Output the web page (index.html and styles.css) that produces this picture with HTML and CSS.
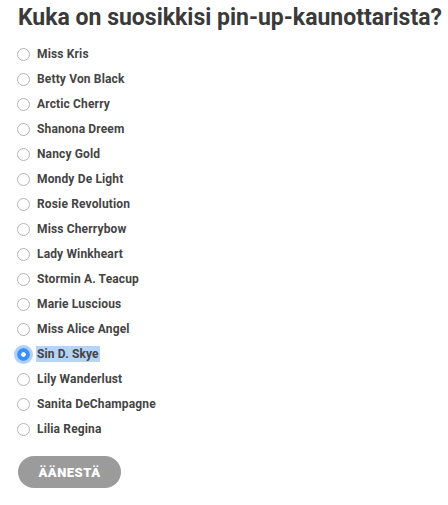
FILE: index.html
```html
<!DOCTYPE html>
<html lang="fi">
<head>
    <meta charset="UTF-8">
    <meta name="viewport" content="width=device-width, initial-scale=1.0">
    <title>Kysely</title>
    <link rel="stylesheet" href="styles.css">
</head>
<body>
    <div class="poll">
        <h1>Kuka on suosikkisi pin-up-kaunottarista?</h1>

        <div class="options">
            <label class="option"><input type="radio" name="vote"><span>Miss Kris</span></label>
            <label class="option"><input type="radio" name="vote"><span>Betty Von Black</span></label>
            <label class="option"><input type="radio" name="vote"><span>Arctic Cherry</span></label>
            <label class="option"><input type="radio" name="vote"><span>Shanona Dreem</span></label>
            <label class="option"><input type="radio" name="vote"><span>Nancy Gold</span></label>
            <label class="option"><input type="radio" name="vote"><span>Mondy De Light</span></label>
            <label class="option"><input type="radio" name="vote"><span>Rosie Revolution</span></label>
            <label class="option"><input type="radio" name="vote"><span>Miss Cherrybow</span></label>
            <label class="option"><input type="radio" name="vote"><span>Lady Winkheart</span></label>
            <label class="option"><input type="radio" name="vote"><span>Stormin A. Teacup</span></label>
            <label class="option"><input type="radio" name="vote"><span>Marie Luscious</span></label>
            <label class="option"><input type="radio" name="vote"><span>Miss Alice Angel</span></label>
            <label class="option selected"><input type="radio" name="vote" checked><span>Sin D. Skye</span></label>
            <label class="option"><input type="radio" name="vote"><span>Lily Wanderlust</span></label>
            <label class="option"><input type="radio" name="vote"><span>Sanita DeChampagne</span></label>
            <label class="option"><input type="radio" name="vote"><span>Lilia Regina</span></label>
        </div>

        <button class="vote-btn">Äänestä</button>
    </div>
</body>
</html>
```

FILE: styles.css
```css
body {
    margin: 0;
    font-family: Roboto, "Liberation Sans", sans-serif;
    color: #3c3c3c;
    background-color: #fff;
}
.poll {
    padding: 3px 0 0 18px;
}
h1 {
    margin: 0 0 8px 0;
    font-size: 23px;
    font-weight: 700;
    line-height: 30px;
    white-space: nowrap;
    color: #3a3a3a;
}
.options {
    display: flex;
    flex-direction: column;
}
.option {
    display: flex;
    align-items: center;
    height: 25px;
    font-size: 12px;
    font-weight: 700;
    letter-spacing: 0.15px;
    color: #444;
}
.option input {
    appearance: none;
    -webkit-appearance: none;
    width: 13px;
    height: 13px;
    margin: 1px 6px 0 -1px;
    border: 1px solid #b5b5b5;
    border-radius: 50%;
    background-color: #fff;
    box-sizing: border-box;
}
.option input:checked {
    border: none;
    background: radial-gradient(circle, #fff 0 2px, #3b8ff5 2.5px);
    box-shadow: 0 0 0 3px rgba(110, 170, 250, 0.55);
}
.option span {
    padding: 1px 1px;
}
.selected span {
    background-color: #b4d4f8;
}
.vote-btn {
    margin-top: 15px;
    width: 103px;
    height: 32px;
    border: none;
    border-radius: 16px;
    background-color: #9b9b9c;
    color: #fff;
    font-family: Roboto, "Liberation Sans", sans-serif;
    font-size: 13px;
    font-weight: 900;
    text-transform: uppercase;
    letter-spacing: 0.5px;
    cursor: pointer;
}
```
